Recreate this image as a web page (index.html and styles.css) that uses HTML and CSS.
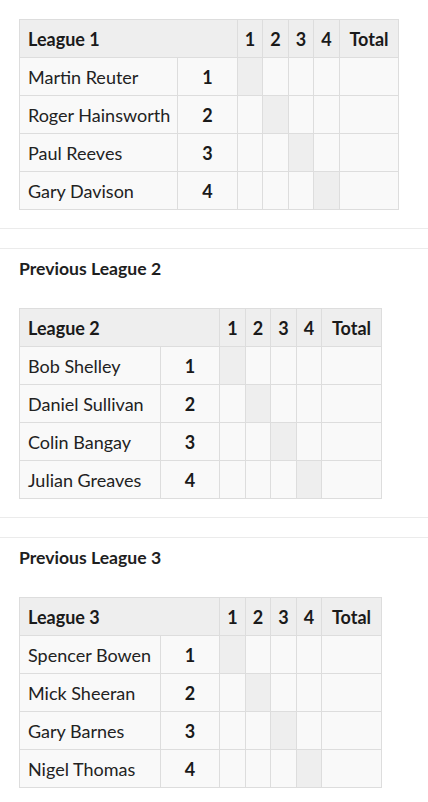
FILE: index.html
```html
<!DOCTYPE html>
<html lang="en">
<head>
<meta charset="utf-8">
<title>Leagues</title>
<link rel="stylesheet" href="styles.css">
</head>
<body>
<section class="league first">
  <table class="grid wide">
    <colgroup>
      <col class="c-name"><col class="c-rank"><col class="c-a"><col class="c-b"><col class="c-a"><col class="c-b"><col class="c-total">
    </colgroup>
    <thead>
      <tr><th colspan="2" class="title">League 1</th><th>1</th><th>2</th><th>3</th><th>4</th><th>Total</th></tr>
    </thead>
    <tbody>
      <tr><td class="name">Martin Reuter</td><td class="rank">1</td><td class="diag"></td><td></td><td></td><td></td><td></td></tr>
      <tr><td class="name">Roger Hainsworth</td><td class="rank">2</td><td></td><td class="diag"></td><td></td><td></td><td></td></tr>
      <tr><td class="name">Paul Reeves</td><td class="rank">3</td><td></td><td></td><td class="diag"></td><td></td><td></td></tr>
      <tr><td class="name">Gary Davison</td><td class="rank">4</td><td></td><td></td><td></td><td class="diag"></td><td></td></tr>
    </tbody>
  </table>
</section>
<div class="divider"></div>
<section class="league">
  <h2 class="heading">Previous League 2</h2>
  <table class="grid narrow">
    <colgroup>
      <col class="c-name"><col class="c-rank"><col class="c-b"><col class="c-a"><col class="c-b"><col class="c-a"><col class="c-total">
    </colgroup>
    <thead>
      <tr><th colspan="2" class="title">League 2</th><th>1</th><th>2</th><th>3</th><th>4</th><th>Total</th></tr>
    </thead>
    <tbody>
      <tr><td class="name">Bob Shelley</td><td class="rank">1</td><td class="diag"></td><td></td><td></td><td></td><td></td></tr>
      <tr><td class="name">Daniel Sullivan</td><td class="rank">2</td><td></td><td class="diag"></td><td></td><td></td><td></td></tr>
      <tr><td class="name">Colin Bangay</td><td class="rank">3</td><td></td><td></td><td class="diag"></td><td></td><td></td></tr>
      <tr><td class="name">Julian Greaves</td><td class="rank">4</td><td></td><td></td><td></td><td class="diag"></td><td></td></tr>
    </tbody>
  </table>
</section>
<div class="divider"></div>
<section class="league">
  <h2 class="heading">Previous League 3</h2>
  <table class="grid narrow">
    <colgroup>
      <col class="c-name"><col class="c-rank"><col class="c-b"><col class="c-a"><col class="c-b"><col class="c-a"><col class="c-total">
    </colgroup>
    <thead>
      <tr><th colspan="2" class="title">League 3</th><th>1</th><th>2</th><th>3</th><th>4</th><th>Total</th></tr>
    </thead>
    <tbody>
      <tr><td class="name">Spencer Bowen</td><td class="rank">1</td><td class="diag"></td><td></td><td></td><td></td><td></td></tr>
      <tr><td class="name">Mick Sheeran</td><td class="rank">2</td><td></td><td class="diag"></td><td></td><td></td><td></td></tr>
      <tr><td class="name">Gary Barnes</td><td class="rank">3</td><td></td><td></td><td class="diag"></td><td></td><td></td></tr>
      <tr><td class="name">Nigel Thomas</td><td class="rank">4</td><td></td><td></td><td></td><td class="diag"></td><td></td></tr>
    </tbody>
  </table>
</section>
</body>
</html>
```
FILE: styles.css
```css
html, body {
  margin: 0;
  padding: 0;
  background: #ffffff;
}
body {
  font-family: Lato, "Open Sans", sans-serif;
  font-size: 18px;
  color: #222222;
}
.league {
  padding: 0 19px;
}
.league.first {
  padding-top: 19px;
}
.heading {
  margin: 0;
  padding-top: 8px;
  font-size: 17.6px;
  line-height: 24px;
  font-weight: 700;
  color: #1e1e1e;
}
.divider {
  margin-top: 18px;
  height: 19px;
  border-top: 1px solid #ebebeb;
  border-bottom: 1px solid #ebebeb;
}
.grid {
  table-layout: fixed;
  border-collapse: separate;
  border-spacing: 0;
  border-top: 1px solid #dddddd;
  border-left: 1px solid #dddddd;
}
.heading + .grid {
  margin-top: 27px;
}
.grid.wide { width: 380px; }
.grid.narrow { width: 363px; }
.wide .c-name { width: 158px; }
.wide .c-rank { width: 60px; }
.wide .c-a { width: 25px; }
.wide .c-b { width: 26px; }
.wide .c-total { width: 59px; }
.narrow .c-name { width: 141px; }
.narrow .c-rank { width: 59px; }
.narrow .c-a { width: 25px; }
.narrow .c-b { width: 26px; }
.narrow .c-total { width: 60px; }
.grid th,
.grid td {
  box-sizing: border-box;
  height: 38px;
  padding: 0;
  border-right: 1px solid #dddddd;
  border-bottom: 1px solid #dddddd;
  text-align: center;
  vertical-align: middle;
  line-height: 24px;
  white-space: nowrap;
}
.grid th {
  background: #eeeeee;
  font-weight: 700;
  color: #1a1a1a;
}
.grid th.title {
  text-align: left;
  padding-left: 8px;
}
.grid td {
  background: #f9f9f9;
}
.grid td.name {
  text-align: left;
  padding-left: 8px;
  font-weight: 400;
}
.grid td.rank {
  font-weight: 700;
  color: #1a1a1a;
}
.grid td.diag {
  background: #eeeeee;
}
```
